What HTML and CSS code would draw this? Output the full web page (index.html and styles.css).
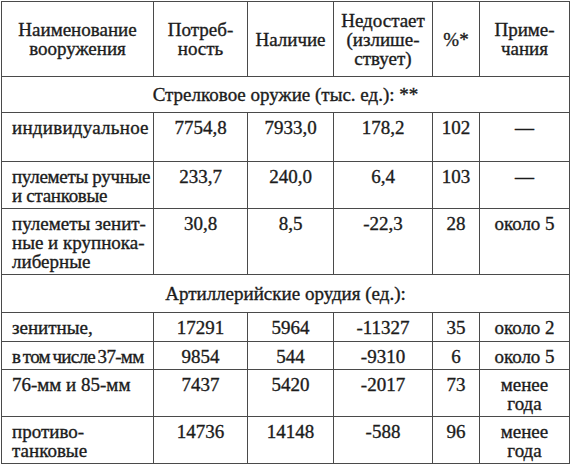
FILE: index.html
```html
<!DOCTYPE html>
<html lang="ru">
<head>
<meta charset="utf-8">
<link rel="stylesheet" href="styles.css">
</head>
<body>
<table class="arms">
  <colgroup>
    <col class="c-name">
    <col class="c-need">
    <col class="c-have">
    <col class="c-lack">
    <col class="c-pct">
    <col class="c-note">
  </colgroup>
  <thead>
    <tr class="r-head">
      <th>Наименование<br>вооружения</th>
      <th>Потреб-<br>ность</th>
      <th>Наличие</th>
      <th>Недостает<br>(излише-<br>ствует)</th>
      <th>%*</th>
      <th>Приме-<br>чания</th>
    </tr>
  </thead>
  <tbody>
    <tr class="r-sec1"><td colspan="6" class="section">Стрелковое оружие (тыс. ед.): **</td></tr>
    <tr class="r-1">
      <td class="name wide">индивидуальное</td><td>7754,8</td><td>7933,0</td><td>178,2</td><td>102</td><td>—</td>
    </tr>
    <tr class="r-2">
      <td class="name snug">пулеметы ручные<br>и станковые</td><td>233,7</td><td>240,0</td><td>6,4</td><td>103</td><td>—</td>
    </tr>
    <tr class="r-3">
      <td class="name">пулеметы зенит-<br>ные и крупнока-<br>либерные</td><td>30,8</td><td>8,5</td><td>-22,3</td><td>28</td><td>около 5</td>
    </tr>
    <tr class="r-sec2"><td colspan="6" class="section">Артиллерийские орудия (ед.):</td></tr>
    <tr class="r-4">
      <td class="name">зенитные,</td><td>17291</td><td>5964</td><td>-11327</td><td>35</td><td>около 2</td>
    </tr>
    <tr class="r-5">
      <td class="name tight">в том числе 37-мм</td><td>9854</td><td>544</td><td>-9310</td><td>6</td><td>около 5</td>
    </tr>
    <tr class="r-6">
      <td class="name">76-мм и 85-мм</td><td>7437</td><td>5420</td><td>-2017</td><td>73</td><td>менее<br>года</td>
    </tr>
    <tr class="r-7">
      <td class="name">противо-<br>танковые</td><td>14736</td><td>14148</td><td>-588</td><td>96</td><td>менее<br>года</td>
    </tr>
  </tbody>
</table>
</body>
</html>
```
FILE: styles.css
```css
html, body {
  margin: 0;
  padding: 0;
  background: #ffffff;
}

body {
  padding: 1px 0 0 1px;
  font-family: "Liberation Serif", "Times New Roman", serif;
  font-size: 19px;
  color: #1c1c1c;
  -webkit-text-stroke: 0.35px #1c1c1c;
}

.arms {
  border-collapse: collapse;
  table-layout: fixed;
  width: 568px;
}

.c-name { width: 152px; }
.c-need { width: 94px; }
.c-have { width: 86px; }
.c-lack { width: 99px; }
.c-pct  { width: 47px; }
.c-note { width: 90px; }

.arms th,
.arms td {
  border: 1px solid #4a4a4a;
  padding: 5px 1px 0 1px;
  line-height: 19px;
  text-align: center;
  vertical-align: top;
  font-weight: normal;
  white-space: nowrap;
  overflow: hidden;
}

.arms th {
  vertical-align: middle;
  padding: 0 1px;
}

.arms td.name {
  text-align: left;
  padding-left: 10px;
  padding-right: 0;
}

.arms td.section {
  vertical-align: middle;
  padding: 0;
}

.wide { letter-spacing: 0.25px; }
.snug { letter-spacing: -0.3px; }
.tight { letter-spacing: -0.7px; word-spacing: -1.5px; }

.r-head { height: 75px; }
.r-sec1 { height: 36px; }
.r-1 { height: 49px; }
.r-2 { height: 47px; }
.r-3 { height: 66px; }
.r-sec2 { height: 38px; }
.r-4 { height: 29px; }
.r-5 { height: 28px; }
.r-6 { height: 47px; }
.r-7 { height: 47px; }
```
